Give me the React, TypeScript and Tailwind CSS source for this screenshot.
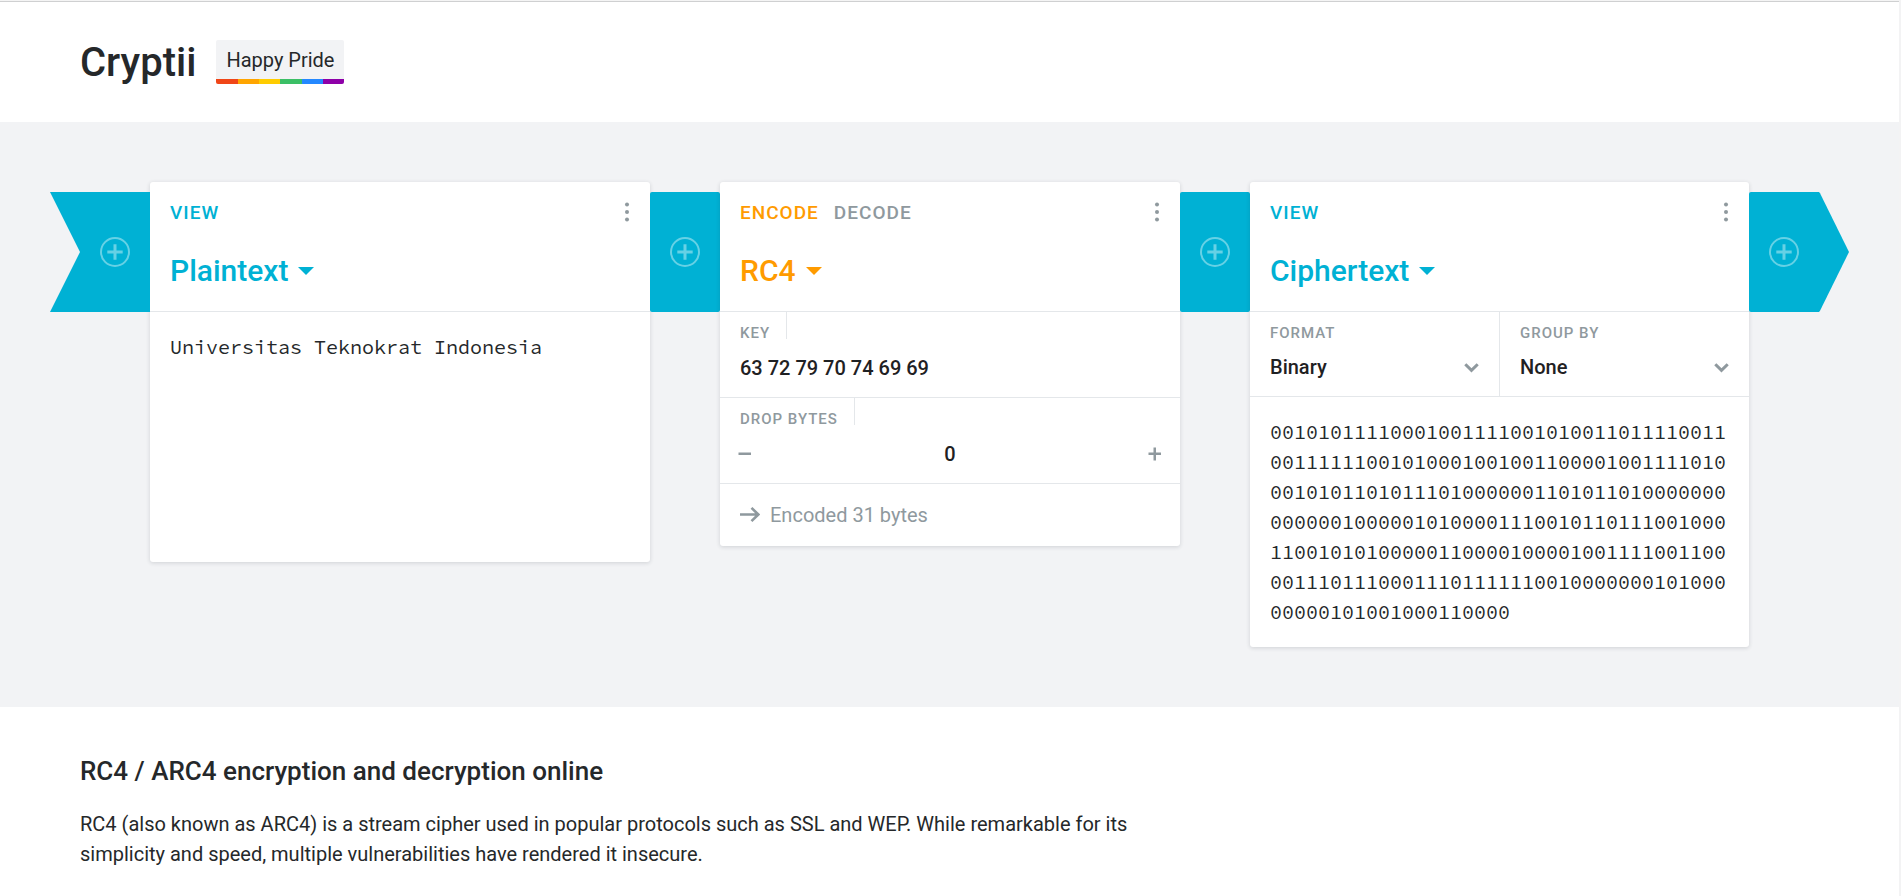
import { useState, type ReactNode } from "react";

const CIPHER =
  "00101011110001001111001010011011110011" +
  "00111111001010001001001100001001111010" +
  "00101011010111010000001101011010000000" +
  "00000010000010100001110010110111001000" +
  "11001010100000110000100001001111001100" +
  "00111011100011101111110010000000101000" +
  "00000101001000110000";

function PlusCircle() {
  return (
    <svg className="block size-[30px]" viewBox="0 0 30 30" fill="none" stroke="#66d1e5" aria-hidden="true">
      <circle cx="15" cy="15" r="14" strokeWidth="2" />
      <path d="M15 7.3v15.4M7.3 15h15.4" strokeWidth="3" />
    </svg>
  );
}

function Connector() {
  return (
    <button
      type="button"
      aria-label="Add brick"
      className="mt-[10px] flex h-[120px] w-[70px] shrink-0 items-center justify-center rounded-[2px] bg-[#00b1d4]"
    >
      <PlusCircle />
    </button>
  );
}

function StartConnector() {
  return (
    <button
      type="button"
      aria-label="Add brick at start"
      className="mt-[10px] flex h-[120px] w-[100px] shrink-0 items-center justify-end bg-[#00b1d4] pr-5 [clip-path:polygon(0_0,100%_0,100%_100%,0_100%,30%_50%)]"
    >
      <PlusCircle />
    </button>
  );
}

function EndConnector() {
  return (
    <button
      type="button"
      aria-label="Add brick at end"
      className="mt-[10px] flex h-[120px] w-[100px] shrink-0 items-center rounded-l-[2px] bg-[#00b1d4] pl-5 [clip-path:polygon(0_0,70%_0,71%_1%,100%_50%,71%_99%,70%_100%,0_100%)]"
    >
      <PlusCircle />
    </button>
  );
}

function Brick({
  basis,
  tone,
  title,
  modes,
  children,
}: {
  basis: string;
  tone: string;
  title: string;
  modes: string[];
  children: ReactNode;
}) {
  return (
    <section className={`${basis} min-w-0 overflow-hidden rounded-[3px] bg-white shadow-[0_1px_4px_rgba(32,40,50,0.16)]`}>
      <header className="flex h-[130px] flex-col border-b border-[#e4e7ea] px-5 pt-4">
        <div className="flex h-[30px] items-start justify-between">
          <div className="flex gap-[15px]">
            {modes.map((mode, i) => (
              <button
                key={mode}
                type="button"
                className={`text-[19px] leading-[30px] font-medium tracking-[1px] uppercase ${i === 0 ? tone : "text-[#8f999e]"}`}
              >
                {mode}
              </button>
            ))}
          </div>
          <button type="button" aria-label={`${title} menu`} className="pt-1">
            <svg className="block h-5 w-[6px]" viewBox="0 0 6 20" fill="#8f999e" aria-hidden="true">
              <circle cx="3" cy="2.5" r="2" />
              <circle cx="3" cy="10" r="2" />
              <circle cx="3" cy="17.5" r="2" />
            </svg>
          </button>
        </div>
        <h3 className="mt-[23px]">
          <button type="button" className={`flex items-center gap-[10px] text-[30px] leading-[40px] font-medium ${tone}`}>
            {title}
            <svg className="block h-2 w-4" viewBox="0 0 16 8" fill="currentColor" aria-hidden="true">
              <path d="M0 0h16L8 8z" />
            </svg>
          </button>
        </h3>
      </header>
      {children}
    </section>
  );
}

const labelClass = "text-[15px] leading-[20px] font-medium tracking-[1px] text-[#8f999e] uppercase";
const valueClass = "text-[20px] leading-[30px] font-medium text-[#1f2123] outline-none";
const monoClass =
  "block w-full resize-none overflow-hidden px-5 py-5 font-['Source_Code_Pro','Liberation_Mono',monospace] text-[20px] leading-[30px] break-all text-[#25282a] outline-none";

function SelectField({ id, label, options }: { id: string; label: string; options: string[] }) {
  return (
    <div className="flex flex-1 flex-col px-5 pt-[11px] pb-[14px]">
      <label htmlFor={id} className={labelClass}>
        {label}
      </label>
      <div className="mt-[9px] grid items-center">
        <select id={id} className={`col-start-1 row-start-1 w-full appearance-none bg-transparent ${valueClass}`}>
          {options.map((o) => (
            <option key={o}>{o}</option>
          ))}
        </select>
        <svg
          className="pointer-events-none col-start-1 row-start-1 mt-[2px] block h-[10px] w-[15px] justify-self-end"
          viewBox="0 0 15 10"
          fill="none"
          stroke="#8f999e"
          strokeWidth="3"
          aria-hidden="true"
        >
          <path d="M1.3 1.2 7.5 7.4l6.2-6.2" />
        </svg>
      </div>
    </div>
  );
}

function FieldLabel({ id, children }: { id: string; children: ReactNode }) {
  return (
    <div className="flex">
      <label htmlFor={id} className={`h-[27px] border-r border-[#e4e7ea] pt-[11px] pr-4 pl-5 ${labelClass}`}>
        {children}
      </label>
    </div>
  );
}

export default function App() {
  const [text, setText] = useState("Universitas Teknokrat Indonesia");
  const [key, setKey] = useState("63 72 79 70 74 69 69");
  const [drop, setDrop] = useState(0);

  return (
    <div className="min-h-screen border-t border-r-2 border-t-[#f4f4f4] border-r-[#f3f3f4] bg-white font-['Roboto',sans-serif] text-[20px] leading-[30px] text-[#25282a]">
      <header className="flex h-[121px] items-center gap-5 border-t border-[#cfd0d1] px-20">
        <h1 className="pt-[2px] text-[40px] leading-[50px] font-medium">
          <a href="#">Cryptii</a>
        </h1>
        <a href="#pride" className="flex flex-col overflow-hidden rounded-[2px] bg-[#f2f3f5]">
          <span className="px-[10px] pt-[5px] pb-1">Happy Pride</span>
          <span className="flex h-[5px]">
            <span className="flex-1 bg-[#f04618]" />
            <span className="flex-1 bg-[#ffa500]" />
            <span className="flex-1 bg-[#ffcc00]" />
            <span className="flex-1 bg-[#3bbf66]" />
            <span className="flex-1 bg-[#2488ff]" />
            <span className="flex-1 bg-[#8e00a8]" />
          </span>
        </a>
      </header>

      <main className="flex items-start bg-[#f2f3f5] px-[50px] py-[60px]">
        <StartConnector />
        <Brick basis="flex-[1_1_500px]" tone="text-[#00b1d4]" title="Plaintext" modes={["View"]}>
          <textarea
            aria-label="Plaintext"
            rows={7}
            spellCheck={false}
            className={monoClass}
            value={text}
            onChange={(e) => setText(e.target.value)}
          />
        </Brick>
        <Connector />
        <Brick basis="flex-[1_1_460px]" tone="text-[#ff9b00]" title="RC4" modes={["Encode", "Decode"]}>
          <div className="border-b border-[#e4e7ea] pb-[14px]">
            <FieldLabel id="key">Key</FieldLabel>
            <input
              id="key"
              className={`mt-[14px] block w-full px-5 ${valueClass}`}
              value={key}
              onChange={(e) => setKey(e.target.value)}
            />
          </div>
          <div className="border-b border-[#e4e7ea] pb-[14px]">
            <FieldLabel id="drop">Drop bytes</FieldLabel>
            <div className="mt-[14px] flex items-center px-[18px]">
              <button type="button" aria-label="Decrease" onClick={() => setDrop(Math.max(0, drop - 1))}>
                <svg className="block size-[14px]" viewBox="0 0 14 14" stroke="#8f999e" strokeWidth="2.500" aria-hidden="true">
                  <path d="M0.5 6.750h12.500" />
                </svg>
              </button>
              <input
                id="drop"
                className={`w-0 flex-1 text-center ${valueClass}`}
                value={drop}
                onChange={(e) => setDrop(Number(e.target.value) || 0)}
              />
              <button type="button" aria-label="Increase" onClick={() => setDrop(drop + 1)}>
                <svg className="block size-[14px]" viewBox="0 0 14 14" stroke="#8f999e" strokeWidth="2.500" aria-hidden="true">
                  <path d="M0.5 6.750h12.500M6.750 0.5v13" />
                </svg>
              </button>
            </div>
          </div>
          <p className="flex items-center gap-[10px] px-5 py-4 text-[#8f999e]">
            <svg className="block h-4 w-5" viewBox="0 0 20 16" fill="none" stroke="currentColor" strokeWidth="2.6" aria-hidden="true">
              <path d="M0 7.500h18.500M11.500 0.900 18.300 7.500l-6.800 6.600" />
            </svg>
            Encoded 31 bytes
          </p>
        </Brick>
        <Connector />
        <Brick basis="flex-[1_1_499px]" tone="text-[#00b1d4]" title="Ciphertext" modes={["View"]}>
          <div className="flex divide-x divide-[#e4e7ea] border-b border-[#e4e7ea]">
            <SelectField id="format" label="Format" options={["Binary", "Hexadecimal", "Base64"]} />
            <SelectField id="group" label="Group by" options={["None", "Byte"]} />
          </div>
          <textarea aria-label="Ciphertext" rows={7} spellCheck={false} readOnly className={monoClass} value={CIPHER} />
        </Brick>
        <EndConnector />
      </main>

      <article className="px-20 pt-[44px]">
        <h2 className="text-[26px] leading-[40px] font-medium">RC4 / ARC4 encryption and decryption online</h2>
        <p className="mt-[18px] max-w-[1080px]">
          RC4 (also known as ARC4) is a stream cipher used in popular protocols such as SSL and WEP. While remarkable for
          its simplicity and speed, multiple vulnerabilities have rendered it insecure.
        </p>
      </article>
    </div>
  );
}
